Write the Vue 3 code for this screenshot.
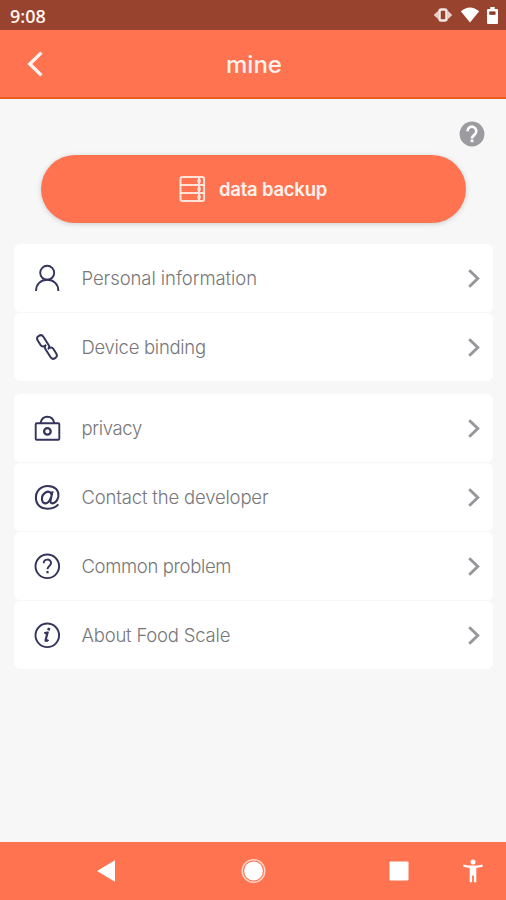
<script setup>
const groups = [
  [
    { id: 'person', label: 'Personal information', tracking: -0.07 },
    { id: 'link', label: 'Device binding', tracking: -0.29 },
  ],
  [
    { id: 'lock', label: 'privacy', tracking: -0.36 },
    { id: 'at', label: 'Contact the developer', tracking: -0.17 },
    { id: 'question', label: 'Common problem', tracking: -0.35 },
    { id: 'info', label: 'About Food Scale', tracking: -0.21 },
  ],
]
</script>

<template>
  <div class="screen">
    <div class="status">
      <span class="time">9:08</span>
      <div class="indicators">
        <svg class="vibrate" width="20" height="16" viewBox="0 0 20 16">
          <path d="M.7 8l4.6-4.300v8.600zM19.300 8l-4.600-4.300v8.600z" fill="#e9cfc7" />
          <rect x="6.500" y="2.500" width="7" height="11" rx="1.800" fill="none" stroke="#f6e9e5" stroke-width="2.500" />
        </svg>
        <svg class="wifi" width="20" height="16" viewBox="0 0 20 16">
          <path d="M.8 4.200Q10-3.400 19.200 4.200L10 15.400z" fill="#fff" />
        </svg>
        <svg class="battery" width="11" height="17" viewBox="0 0 11 17">
          <path d="M3.300 0h4.400v2H10q1 0 1 1v13q0 1-1 1H1q-1 0-1-1V3q0-1 1-1h2.300z" fill="#fff" />
          <rect x="2.300" y="4.400" width="6.200" height="3.400" fill="#8b3724" />
        </svg>
      </div>
    </div>

    <header class="bar">
      <svg class="back" width="20" height="28" viewBox="0 0 20 28">
        <path d="M15.400 2.600L3.800 14l11.600 11.400" fill="none" stroke="#fff5f1" stroke-width="3.400" />
      </svg>
      <h1>mine</h1>
    </header>

    <main>
      <div class="help">
        <svg width="26" height="26" viewBox="0 0 26 26">
          <circle cx="13" cy="13" r="12.400" fill="#9b9ba0" />
          <path d="M8.500 10.200a4.400 4.400 0 1 1 7.200 3.300c-1.600 1.300-2.700 2-2.700 3.900" fill="none" stroke="#fff" stroke-width="2.700" />
          <rect x="11.600" y="18.500" width="2.800" height="2.700" fill="#fff" />
        </svg>
      </div>

      <button class="backup">
        <svg width="28" height="28" viewBox="0 0 28 28" fill="none" stroke="#ffe4dc" stroke-width="2">
          <rect x="2.500" y="2" width="23.600" height="24" rx="2" />
          <path d="M2.500 10h23.600M2.500 18h23.600" />
          <path d="M21 2v24" stroke-width="2" />
          <path d="M19.300 6h3.400M19.300 14h3.400M19.300 22h3.400" stroke-width="3" />
        </svg>
        <span>data backup</span>
      </button>

      <section v-for="(group, i) in groups" :key="i" class="group">
        <div v-for="item in group" :key="item.id" class="row">
          <svg class="icon" width="28" height="28" viewBox="0 0 28 28" fill="none" stroke="#35345d" stroke-width="1.900">
            <template v-if="item.id === 'person'">
              <circle cx="14.200" cy="8.800" r="7" />
              <path d="M3 27c0-6.600 4.600-11.200 11.200-11.200s11.200 4.600 11.200 11.200" />
            </template>
            <g v-else-if="item.id === 'link'" transform="rotate(-32 14 14)" stroke-width="2">
              <path d="M12.600 11.900q-3 0-3-3V3.600q0-3.400 3.400-3.400t3.400 3.400v9.600q0 3-2.800 3" />
              <path d="M12.600 11.900q-3 0-3-3V3.600q0-3.400 3.400-3.400t3.400 3.400v9.600q0 3-2.800 3" transform="rotate(180 14 14)" />
            </g>
            <template v-else-if="item.id === 'lock'">
              <rect x="2.700" y="9.300" width="23.600" height="16.400" rx="1" />
              <path d="M7.500 9.300q1.200-6.600 6.900-6.600t6.900 6.600" />
              <circle cx="14.400" cy="17.400" r="3.300" stroke-width="2.300" />
            </template>
            <template v-else-if="item.id === 'at'">
              <path d="M19.600 8.200l-2 8.700q-.6 3.500 1.700 3.500 4.700-.8 6-6.700C26.200 7 21.500 3 14.700 3 8 3 2.900 7.900 2.900 14.700c0 6.600 4.600 11 11.800 11 4.500 0 8-1.300 10.700-4.300" stroke-width="2.100" />
              <path d="M18.700 12c-.6-2.900-3.200-4.200-5.700-2.800-2.900 1.600-4.400 5-4 7.800.4 3.500 3.900 4.300 6.400 2 1.400-1.300 2.300-3.100 2.700-4.800" stroke-width="2.200" />
            </template>
            <template v-else-if="item.id === 'question'">
              <circle cx="14.300" cy="14.300" r="11.800" />
              <path d="M10.700 11.300c0-5 7.400-4.800 7.400-.4 0 2.900-3.600 3.200-3.600 6.300" />
              <path d="M14.500 19v2.300" stroke-width="2.200" />
            </template>
            <template v-else>
              <circle cx="14.300" cy="14.300" r="11.800" />
              <path d="M11.300 12.300q2.300-.9 3.300-.7l-2 7.400q-.4 2 2.900-.1" stroke-width="2.200" />
              <path d="M16.100 6.900l-.7 2.500" stroke-width="2.700" />
            </template>
          </svg>
          <span class="label" :style="{ letterSpacing: item.tracking + 'px' }">{{ item.label }}</span>
          <svg class="chevron" width="14" height="20" viewBox="0 0 14 20">
            <path d="M2.200 2.200L10.800 10.500l-8.600 8.300" fill="none" stroke="#97979b" stroke-width="2.900" />
          </svg>
        </div>
      </section>
    </main>

    <nav class="nav">
      <svg class="nav-back" width="20" height="24" viewBox="0 0 20 24">
        <path d="M1 12L19 1.200v21.600z" fill="#fff" />
      </svg>
      <svg class="nav-home" width="26" height="26" viewBox="0 0 26 26">
        <circle cx="13.500" cy="13" r="11.300" fill="none" stroke="#ffd5ca" stroke-width="1.500" />
        <circle cx="13.500" cy="13" r="9.400" fill="#fff" />
      </svg>
      <svg class="nav-recent" width="20" height="20" viewBox="0 0 20 20">
        <rect x=".5" y=".5" width="19" height="19" rx="1" fill="#fff" />
      </svg>
      <svg class="nav-access" width="20" height="24" viewBox="0 0 20 24">
        <circle cx="10" cy="3" r="2.500" fill="#fff" />
        <path d="M.4 5.400Q10 7.800 19.600 5.400v2.300L13.300 9v14.200h-2.400v-6.800H9.100v6.800H6.700V9L.4 7.700z" fill="#fff" />
      </svg>
    </nav>
  </div>
</template>

<style>
body {
  margin: 0;
}
</style>

<style scoped>
.screen {
  width: 506px;
  height: 900px;
  display: flex;
  flex-direction: column;
  background: #f7f7f8;
  font-family: Inter, "Liberation Sans", sans-serif;
  overflow: hidden;
}
.status {
  height: 30px;
  box-sizing: border-box;
  padding: 0 8px 0 10px;
  display: flex;
  align-items: center;
  justify-content: space-between;
  background: #98432e;
  color: #fff3ef;
}
.time {
  font-family: "Open Sans", sans-serif;
  font-size: 18px;
  font-weight: 600;
  line-height: 30px;
  padding-top: 1px;
}
.indicators {
  display: flex;
  align-items: center;
  gap: 7px;
}
.bar {
  height: 69px;
  box-sizing: border-box;
  border-bottom: 2px solid #e85e20;
  background: #ff7350;
  display: grid;
  grid-template-columns: 60px 1fr 60px;
  align-items: center;
}
.back {
  margin-left: 26px;
  margin-top: 1px;
}
h1 {
  margin: 3px 0 0 2px;
  color: #fff3ef;
  font-size: 24px;
  font-weight: 500;
  line-height: 30px;
  text-align: center;
}
main {
  flex: 1;
  padding: 22px 13px 0 14px;
  display: flex;
  flex-direction: column;
}
.help {
  height: 34px;
  display: flex;
  justify-content: flex-end;
  padding-right: 8px;
}
.backup {
  height: 68px;
  margin: 0 27px;
  border: 0;
  border-radius: 34px;
  background: #ff7350;
  box-shadow: 0 1px 5px rgba(70, 80, 80, 0.25);
  color: #fff3ef;
  font-family: inherit;
  font-size: 18.500px;
  font-weight: 600;
  letter-spacing: -0.22px;
  display: flex;
  align-items: center;
  justify-content: center;
  gap: 13px;
  padding: 0 2px 0 0;
  flex: none;
}
.group {
  margin-top: 21px;
  display: flex;
  flex-direction: column;
  gap: 1px;
}
.group + .group {
  margin-top: 13px;
}
.row {
  height: 68px;
  box-sizing: border-box;
  border-radius: 6px;
  background: #fff;
  display: flex;
  align-items: center;
  padding: 0 12px 0 19px;
}
.label {
  flex: 1;
  margin-left: 20.500px;
  color: #77777b;
  font-size: 18.500px;
  font-weight: 300;
  line-height: 24px;
  white-space: nowrap;
}
.nav {
  height: 58px;
  flex: none;
  display: flex;
  align-items: center;
  padding-left: 96px;
  background: #ff7350;
}
.nav-home {
  margin-left: 124px;
}
.nav-recent {
  margin-left: 123px;
}
.nav-access {
  margin-left: 54px;
}
</style>
